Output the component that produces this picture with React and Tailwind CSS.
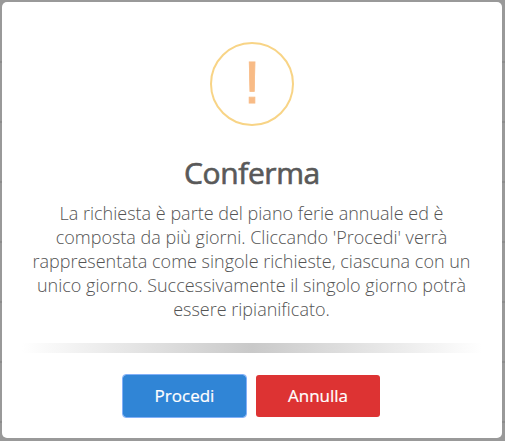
const rows = [0, 1, 2, 3, 4, 5, 6];

export default function App() {
  return (
    <div className="relative h-[441px] w-[505px] overflow-hidden bg-[#999999] font-['Open_Sans',sans-serif]">
      <div className="absolute inset-0 flex flex-col pt-[3px]">
        {rows.map((row) => (
          <div key={row} className="h-[60px] shrink-0 border-b-2 border-[#8c8c8c]" />
        ))}
      </div>
      <div className="relative flex h-full flex-col pt-[2px] pl-[2px]">
        <div
          role="dialog"
          className="flex h-[436px] w-[500px] flex-col items-center rounded-[5px] bg-white pt-10"
        >
          <div className="flex h-[84px] w-[84px] shrink-0 items-center justify-center rounded-full border-2 border-[#f8d486] pb-[3px] font-['Liberation_Sans',sans-serif] text-[60px] leading-[77px] text-[#f8bb86] [-webkit-text-stroke:0.8px_#f8bb86]">
            !
          </div>
          <h2 className="mt-[27px] text-[30px] leading-10 font-medium tracking-[-0.4px] text-[#595959] [-webkit-text-stroke:0.65px_#595959]">
            Conferma
          </h2>
          <p className="mt-[8px] mr-px text-center text-[18px] leading-6 font-light whitespace-nowrap text-[#545454]">
            La richiesta è parte del piano ferie annuale ed è
            <br />
            composta da più giorni. Cliccando 'Procedi' verrà
            <br />
            rappresentata come singole richieste, ciascuna con un
            <br />
            unico giorno. Successivamente il singolo giorno potrà
            <br />
            essere ripianificato.
          </p>
          <div className="mt-[22px] h-[10px] w-[460px] shrink-0 bg-[linear-gradient(to_right,#fff,#c9c9c9,#fff)]" />
          <div className="mt-[22px] mr-px flex gap-[10px]">
            <button className="h-[42px] w-[123px] rounded-[3px] bg-[#3085d6] text-[17px] font-medium text-white outline outline-1 outline-[#82b0f8] [-webkit-text-stroke:0.2px_white]">
              Procedi
            </button>
            <button className="h-[42px] w-[124px] rounded-[3px] bg-[#dd3333] text-[17px] font-medium text-white [-webkit-text-stroke:0.2px_white]">
              Annulla
            </button>
          </div>
        </div>
      </div>
    </div>
  );
}
